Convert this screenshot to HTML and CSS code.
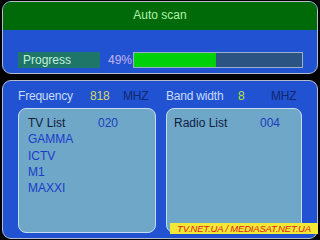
FILE: index.html
```html
<!DOCTYPE html>
<html lang="en">

<head>
  <meta charset="UTF-8" />
  <title>Auto scan</title>
  <link rel="stylesheet" href="styles.css">
</head>

<body>
  <section class="screen">
    <!-- scan progress panel -->
    <div class="panel top">
      <div class="title">Auto scan</div>
      <div class="progress-row">
        <div class="progress-label">Progress</div>
        <div class="progress-pct">49%</div>
        <div class="bar">
          <div class="bar-fill" style="width: 49%"></div>
        </div>
      </div>
    </div>

    <!-- results panel -->
    <div class="panel bottom">
      <div class="info-row">
        <div class="info">
          <span class="info-label">Frequency</span>
          <span class="info-value">818</span>
          <span class="info-unit">MHZ</span>
        </div>
        <div class="info">
          <span class="info-label">Band width</span>
          <span class="info-value green">8</span>
          <span class="info-unit">MHZ</span>
        </div>
      </div>
      <div class="lists">
        <div class="list tv">
          <div class="list-head"><span class="list-name">TV List</span><span class="list-count">020</span></div>
          <div class="ch">GAMMA</div>
          <div class="ch">ICTV</div>
          <div class="ch">M1</div>
          <div class="ch">MAXXI</div>
        </div>
        <div class="list radio">
          <div class="list-head"><span class="list-name">Radio List</span><span class="list-count">004</span></div>
        </div>
      </div>
    </div>

    <div class="watermark">TV.NET.UA / MEDIASAT.NET.UA</div>
  </section>
</body>

</html>
```

FILE: styles.css
```css
/* Reset */
* {
    margin: 0;
    padding: 0;
    box-sizing: border-box;
}

body {
    background-color: #000;
    font-family: "Liberation Sans", Arial, sans-serif;
    font-size: 12px;
}

.screen {
    position: relative;
    width: 320px;
    height: 240px;
    padding: 1px 2px 0 2px;
    display: flex;
    flex-direction: column;
}

/* Panels */
.panel {
    border: 1px solid #b4bcc8;
    border-radius: 9px;
    background-color: #2152d2;
    overflow: hidden;
}

.top {
    height: 73px;
}

.title {
    height: 28px;
    line-height: 27px;
    text-align: center;
    background-color: #006a08;
    color: #b0f4a8;
}

.progress-row {
    display: flex;
    align-items: center;
    padding: 22px 0 0 15px;
}

.progress-label {
    width: 82px;
    height: 16px;
    line-height: 16px;
    padding-left: 5px;
    background-color: #1e7668;
    color: #c4f0dc;
}

.progress-pct {
    width: 33px;
    padding-left: 8px;
    color: #c4b4ec;
}

.bar {
    width: 170px;
    height: 16px;
    border: 1px solid #9cb0c8;
    background-color: #2b5482;
}

.bar-fill {
    height: 100%;
    background-color: #00d00a;
}

/* Results */
.bottom {
    margin-top: 6px;
    height: 159px;
}

.info-row {
    display: flex;
    padding: 8px 0 0 15px;
    height: 27px;
    line-height: 14px;
    letter-spacing: -0.2px;
}

.info {
    display: flex;
    width: 148px;
}

.info-label {
    width: 72px;
    color: #c8dcf8;
}

.info-value {
    width: 33px;
    color: #d8d85c;
}

.info-value.green {
    color: #b8e040;
}

.info-unit {
    color: #12286e;
}

.lists {
    display: flex;
    gap: 10px;
    padding-left: 15px;
}

.list {
    height: 125px;
    border: 1px solid #c4dcec;
    border-radius: 8px;
    background-color: #6fa7c9;
    padding: 6px 0 0 9px;
    line-height: 16.25px;
}

.tv {
    width: 138px;
}

.radio {
    width: 136px;
    padding-left: 7px;
}

.list-head {
    display: flex;
}

.list-name {
    color: #10203c;
}

.tv .list-name {
    width: 70px;
}

.radio .list-name {
    width: 86px;
}

.list-count {
    color: #1c3cbc;
}

.ch {
    color: #1a3cc8;
}

/* Watermark over the corner */
.watermark {
    position: absolute;
    left: 170px;
    top: 223px;
    width: 148px;
    height: 11px;
    line-height: 11px;
    background-color: #f4e836;
    color: #e01a1a;
    font-size: 9.5px;
    font-style: italic;
    letter-spacing: -0.2px;
    text-align: center;
    white-space: nowrap;
    overflow: hidden;
}
```
